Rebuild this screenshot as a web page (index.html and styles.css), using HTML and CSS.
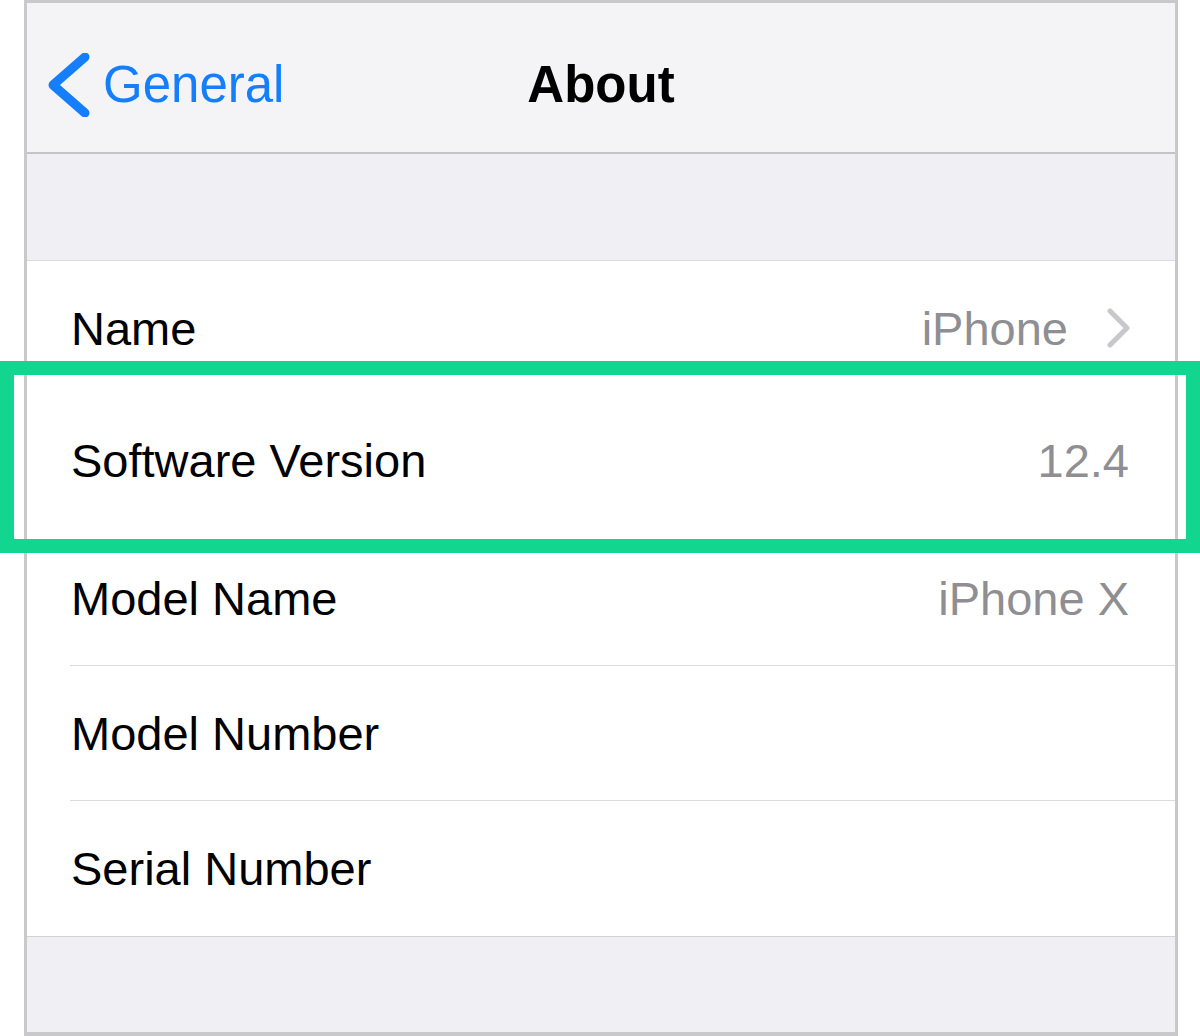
FILE: index.html
```html
<!DOCTYPE html>
<html lang="en">
<head>
<meta charset="utf-8">
<title>About</title>
<link rel="stylesheet" href="styles.css">
</head>
<body>
<div class="frame">
  <header class="nav">
    <div class="back">
      <svg class="back-chevron" width="48" height="64" viewBox="0 0 48 64" aria-hidden="true">
        <path d="M41 4 L9 32 L41 60" fill="none" stroke="#147efb" stroke-width="9" stroke-linecap="round" stroke-linejoin="round"/>
      </svg>
      <span class="back-label">General</span>
    </div>
    <h1 class="title">About</h1>
    <div class="nav-right"></div>
  </header>
  <div class="spacer"></div>
  <ul class="list">
    <li class="row row-plain">
      <div class="row-inner">
        <span class="label">Name</span>
        <span class="value value-link">iPhone
          <svg class="disclosure" width="26" height="40" viewBox="0 0 26 40" aria-hidden="true">
            <path d="M6 3 L23 20 L6 37" fill="none" stroke="#c7c7cc" stroke-width="5" stroke-linecap="round" stroke-linejoin="round"/>
          </svg>
        </span>
      </div>
    </li>
    <li class="row row-plain row-highlighted">
      <div class="row-inner">
        <span class="label">Software Version</span>
        <span class="value">12.4</span>
      </div>
    </li>
    <li class="row">
      <div class="row-inner">
        <span class="label">Model Name</span>
        <span class="value">iPhone X</span>
      </div>
    </li>
    <li class="row">
      <div class="row-inner">
        <span class="label">Model Number</span>
        <span class="value"></span>
      </div>
    </li>
    <li class="row">
      <div class="row-inner">
        <span class="label">Serial Number</span>
        <span class="value"></span>
      </div>
    </li>
  </ul>
  <div class="footer"></div>
</div>
<div class="highlight" aria-hidden="true"></div>
</body>
</html>
```

FILE: styles.css
```css
* {
  box-sizing: border-box;
}

html, body {
  margin: 0;
  padding: 0;
  background: #ffffff;
}

body {
  position: relative;
  width: 1200px;
  height: 1036px;
  overflow: hidden;
  font-family: "Liberation Sans", Arial, sans-serif;
  color: #000;
}

.frame {
  margin-left: 24px;
  width: 1154px;
  height: 1036px;
  border-style: solid;
  border-color: #c9c9cc;
  border-width: 3px 3px 4px 3px;
  display: flex;
  flex-direction: column;
  background: #efeff4;
}

.nav {
  height: 151px;
  padding-top: 14px;
  background: #f4f4f6;
  border-bottom: 2px solid #c4c4c8;
  display: grid;
  grid-template-columns: 1fr auto 1fr;
  align-items: center;
}

.back {
  display: flex;
  align-items: center;
  padding-left: 17px;
  color: #147efb;
}

.back-chevron {
  display: block;
  flex: none;
}

.back-label {
  margin-left: 11px;
  font-size: 51px;
  line-height: 51px;
}

.title {
  margin: 0;
  font-size: 51px;
  line-height: 51px;
  font-weight: 700;
  text-align: center;
}

.spacer {
  height: 107px;
  background: #efeff4;
  border-bottom: 1px solid #d9d9de;
  flex: none;
}

.list {
  margin: 0;
  padding: 0;
  list-style: none;
  background: #ffffff;
  border-bottom: 1px solid #d2d2d6;
  flex: none;
}

.row {
  padding-left: 43px;
  height: 135px;
  display: flex;
}

.row-inner {
  flex: 1;
  display: flex;
  align-items: center;
  justify-content: space-between;
  padding-right: 46px;
  border-bottom: 1px solid #dcdce0;
}

.row-plain .row-inner,
.row:last-child .row-inner {
  border-bottom-color: transparent;
}

.row-highlighted .row-inner {
  padding-bottom: 5px;
}

.label {
  font-size: 47px;
  line-height: 47px;
  padding-left: 1px;
}

.value {
  font-size: 47px;
  line-height: 47px;
  color: #8e8e93;
}

.value-link {
  display: flex;
  align-items: center;
  margin-right: -1px;
}

.disclosure {
  display: block;
  margin-left: 36px;
  flex: none;
}

.footer {
  flex: 1;
  background: #efeff4;
}

.highlight {
  position: absolute;
  left: 0;
  top: 361px;
  width: 1200px;
  height: 192px;
  border: 14px solid #12d68f;
  pointer-events: none;
}
```
